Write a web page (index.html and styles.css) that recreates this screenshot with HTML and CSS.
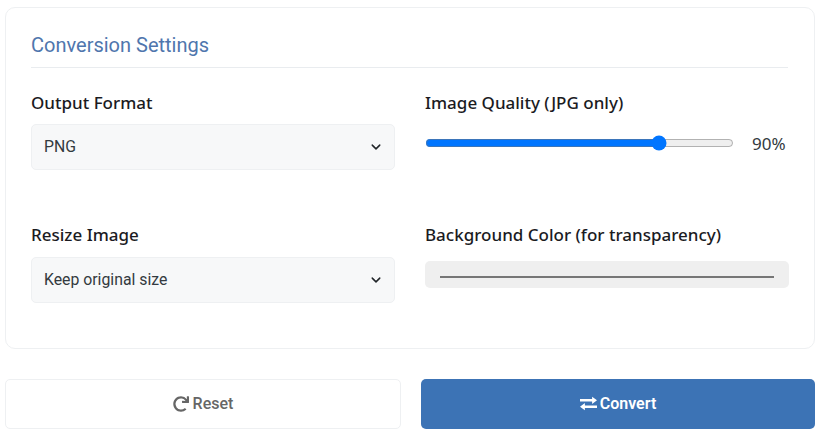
FILE: index.html
```html
<!DOCTYPE html>
<html lang="en">
<head>
<meta charset="utf-8">
<title>Conversion Settings</title>
<link rel="stylesheet" href="styles.css">
</head>
<body>
<main class="page">
  <section class="card">
    <h2 class="card-title">Conversion Settings</h2>
    <div class="grid">
      <div class="field">
        <label class="label" for="fmt">Output Format</label>
        <select class="select" id="fmt"><option>PNG</option><option>JPG</option></select>
      </div>
      <div class="field field-right">
        <label class="label" for="q">Image Quality (JPG only)</label>
        <div class="range-row">
          <input class="range" id="q" type="range" min="0" max="100" value="77">
          <span class="range-value">90%</span>
        </div>
      </div>
      <div class="field">
        <label class="label label-lower" for="size">Resize Image</label>
        <select class="select" id="size"><option>Keep original size</option></select>
      </div>
      <div class="field field-right">
        <label class="label label-lower" for="bg">Background Color (for transparency)</label>
        <input class="color" id="bg" type="color" value="#ffffff">
      </div>
    </div>
  </section>
  <div class="actions">
    <button class="btn btn-reset" type="button">
      <svg class="icon" viewBox="0 0 512 512" aria-hidden="true"><path d="M500 8h-47a12 12 0 0 0-12 12.500l4 82.800A247.400 247.400 0 0 0 256 8C119.300 8 7.900 119.500 8 256.200 8.100 393.100 119.100 504 256 504a247.100 247.100 0 0 0 166.200-64 12 12 0 0 0 .5-17.400l-34-34a12 12 0 0 0-16.400-.6A176 176 0 1 1 402.100 157.800l-101.500-4.900a12 12 0 0 0-12.600 12v47a12 12 0 0 0 12 12h200a12 12 0 0 0 12-12V20a12 12 0 0 0-12-12z"/></svg>
      Reset
    </button>
    <button class="btn btn-convert" type="button">
      <svg class="icon icon-wide" viewBox="0 40 512 432" aria-hidden="true"><path d="M0 122H365V50L512 160 365 270V198H0zM512 314H147V242L0 352 147 462V390H512z"/></svg>
      Convert
    </button>
  </div>
</main>
</body>
</html>
```

FILE: styles.css
```css
* { box-sizing: border-box; }

html, body { margin: 0; background: #fff; }

body {
  font-family: Roboto, "Liberation Sans", sans-serif;
  color: #212529;
}

.page {
  width: 823px;
  padding: 7px 8px 15px 5px;
}

.card {
  height: 342px;
  padding: 20px 26px 0 25px;
  border: 1px solid #eef0f2;
  border-radius: 10px;
  background: #fff;
}

.card-title {
  margin: 0 0 20px;
  padding-bottom: 10px;
  height: 40px;
  border-bottom: 1px solid #e9ecef;
  font-size: 20px;
  font-weight: 400;
  line-height: 35px;
  color: #4f76ad;
}

.grid {
  display: grid;
  grid-template-columns: 364px 364px;
  column-gap: 30px;
  grid-template-rows: 132px auto;
}

.field { min-width: 0; }

.label {
  display: block;
  margin-bottom: 10px;
  padding-top: 2px;
  height: 26px;
  font-family: "Noto Sans", sans-serif;
  font-size: 17px;
  font-weight: 500;
  line-height: 26px;
  color: #1b1b1f;
}

.label-lower { margin-bottom: 11px; }

.select {
  display: block;
  width: 100%;
  height: 46px;
  padding: 0 12px 2px;
  border: 1px solid #eef0f2;
  border-radius: 5px;
  appearance: none;
  background-color: #f7f8f9;
  background-image: url("data:image/svg+xml,%3Csvg xmlns='http://www.w3.org/2000/svg' viewBox='0 0 16 16'%3E%3Cpath fill='none' stroke='%23212529' stroke-linecap='round' stroke-linejoin='round' stroke-width='2.4' d='m2 5 6 6 6-6'/%3E%3C/svg%3E");
  background-repeat: no-repeat;
  background-position: right 13px center;
  background-size: 10px 10px;
  font-family: Roboto, sans-serif;
  font-size: 15.8px;
  color: #333a40;
}

.range-row {
  display: flex;
  align-items: center;
  gap: 18px;
  height: 24px;
  margin-top: 17px;
}

.range {
  width: 309px;
  height: 16px;
  margin: 0;
  accent-color: #0075ff;
}

.range-value {
  font-family: "Noto Sans", sans-serif;
  font-size: 17px;
  color: #333a40;
}

.color {
  display: block;
  width: 100%;
  height: 27px;
  margin-top: 15px;
  padding: 15px 15px 10px;
  border: 0;
  border-radius: 5px;
  background: #efefef;
}

.color::-webkit-color-swatch-wrapper { padding: 0; }

.color::-webkit-color-swatch { border: 1px solid #767676; }

.actions {
  display: grid;
  grid-template-columns: 396px 394px;
  column-gap: 20px;
  margin-top: 30px;
}

.btn {
  display: flex;
  align-items: center;
  justify-content: center;
  gap: 4px;
  height: 50px;
  padding-bottom: 2px;
  border-radius: 5px;
  font-family: Roboto, sans-serif;
  font-size: 16px;
  font-weight: 500;
}

.btn-reset {
  border: 1px solid #eef0f2;
  background: #fff;
  color: #666;
}

.btn-convert {
  gap: 3px;
  border: 0;
  background: #3c73b5;
  color: #fff;
  font-weight: 600;
}

.icon {
  width: 16px;
  height: 16px;
  fill: currentColor;
}

.icon-wide {
  width: 17px;
  height: 15px;
}
```
